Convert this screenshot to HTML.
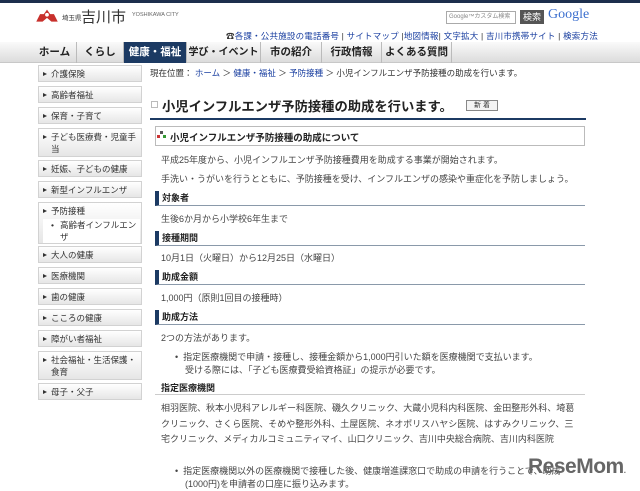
<!DOCTYPE html>
<html><head><meta charset="utf-8"><style>
*{margin:0;padding:0;box-sizing:border-box}
body{width:640px;height:491px;overflow:hidden;background:#fff;font-family:"Liberation Sans","Noto Sans CJK JP",sans-serif;font-size:9px;color:#333;position:relative}
.a{position:absolute;white-space:nowrap}
.top{position:absolute;left:0;top:0;width:640px;height:3px;background:#1d2f4d}
.nav{position:absolute;left:0;top:42px;width:640px;height:21px;background:linear-gradient(#fafafa,#dcdcdc);border-bottom:1px solid #c8c8c8}
.ni{position:absolute;top:42px;height:21px;line-height:21px;text-align:center;font-size:10.5px;font-weight:bold;color:#222;border-right:1px solid #bbb;overflow:hidden}
.ni.on{background:#1c3a63;color:#fff}
.side{position:absolute;left:38px;width:104px;background:linear-gradient(#fff,#e6e6e6);border:1px solid #d2d2d2;font-size:8.5px;padding:2px 4px 2px 12px;line-height:12px;color:#333}
.side:before{content:"";position:absolute;left:4px;top:6px;border-left:4px solid #333;border-top:2.5px solid transparent;border-bottom:2.5px solid transparent}
.h3{position:absolute;left:155px;width:430px;height:15px;border-left:4px solid #1c3a63;border-bottom:1px solid #8a99aa;font-weight:bold;font-size:9px;padding-left:3px;line-height:14px;color:#222}
.p{position:absolute;left:161px;font-size:9px;color:#444;white-space:nowrap}
a{color:#1a3fa0}
</style></head><body>
<div class="top"></div>
<svg class="a" style="left:35px;top:5px" width="24" height="22" viewBox="0 0 38 22"><path d="M19 1 L24 8 L30 8 L36 20 L26 20 L19 14 L12 20 L2 20 L8 8 L14 8Z" fill="#c8302c"/><circle cx="19" cy="9" r="3" fill="#fff"/></svg>
<div class="a" style="left:62px;top:12px;font-size:6.5px">埼玉県</div>
<div class="a" style="left:81px;top:6px;font-size:15px;color:#333">吉川市</div>
<div class="a" style="left:132px;top:12px;font-size:5.5px;color:#666">YOSHIKAWA CITY</div>
<div class="a" style="left:446px;top:11px;width:70px;height:13px;border:1px solid #aaa;font-size:6px;color:#888;line-height:11px;padding-left:2px">Google™カスタム検索</div>
<div class="a" style="left:520px;top:10px;width:24px;height:14px;background:#555;color:#fff;font-size:9px;text-align:center;line-height:14px">検索</div>
<div class="a" style="left:548px;top:7px;font-size:14px;font-family:'Liberation Serif',serif;color:#3b6fcf">Google</div>
<div class="a" style="left:226px;top:30px;font-size:8.5px;color:#333;letter-spacing:0.2px">☎<a>各課・公共施設の電話番号</a> | <a>サイトマップ</a> |<a>地図情報</a>| <a>文字拡大</a> | <a>吉川市携帯サイト</a> | <a>検索方法</a></div>
<div class="nav"></div>
<div class="ni" style="left:33px;width:44px">ホーム</div>
<div class="ni" style="left:77px;width:47px">くらし</div>
<div class="ni on" style="left:124px;width:63px">健康・福祉</div>
<div class="ni" style="left:187px;width:74px;font-size:10px">学び・イベント</div>
<div class="ni" style="left:261px;width:61px">市の紹介</div>
<div class="ni" style="left:322px;width:60px">行政情報</div>
<div class="ni" style="left:382px;width:70px">よくある質問</div>

<div class="side" style="top:65px;height:17px">介護保険</div>
<div class="side" style="top:86px;height:17px">高齢者福祉</div>
<div class="side" style="top:107px;height:17px">保育・子育て</div>
<div class="side" style="top:128px;height:29px;white-space:normal">子ども医療費・児童手当</div>
<div class="side" style="top:160px;height:17px">妊娠、子どもの健康</div>
<div class="side" style="top:181px;height:17px">新型インフルエンザ</div>
<div class="side" style="top:202px;height:42px">予防接種<div style="background:#fff;margin:2px -3px 0 -8px;padding-left:17px;white-space:normal;position:relative">高齢者インフルエンザ<span style="position:absolute;left:8px;top:0">•</span></div></div>
<div class="side" style="top:246px;height:17px">大人の健康</div>
<div class="side" style="top:267px;height:17px">医療機関</div>
<div class="side" style="top:288px;height:17px">歯の健康</div>
<div class="side" style="top:309px;height:17px">こころの健康</div>
<div class="side" style="top:330px;height:17px">障がい者福祉</div>
<div class="side" style="top:351px;height:29px;white-space:normal">社会福祉・生活保護・食育</div>
<div class="side" style="top:383px;height:17px">母子・父子</div>

<div class="a" style="left:150px;top:67px;font-size:8.5px">現在位置： <a>ホーム</a> ＞ <a>健康・福祉</a> ＞ <a>予防接種</a> ＞ 小児インフルエンザ予防接種の助成を行います。</div>
<div class="a" style="left:151px;top:101px;width:7px;height:7px;border:1px solid #bbb"></div>
<div class="a" style="left:162px;top:96px;font-size:13.3px;font-weight:bold;color:#222">小児インフルエンザ予防接種の助成を行います。</div>
<div class="a" style="left:466px;top:100px;width:32px;height:11px;border:1px solid #888;font-size:7px;text-align:center;line-height:9px;background:#f4f4f4">新 着</div>
<div class="a" style="left:150px;top:118px;width:436px;height:2px;background:#1c3a63"></div>
<div class="a" style="left:155px;top:126px;width:430px;height:20px;border:1px solid #bbb"></div>
<div class="a" style="left:160px;top:131px;width:3px;height:3px;background:#555;box-shadow:-3px 4px 0 #c33,3px 4px 0 #393"></div>
<div class="a" style="left:170px;top:130px;font-size:9.5px;font-weight:bold;color:#222">小児インフルエンザ予防接種の助成について</div>
<div class="p" style="top:153px">平成25年度から、小児インフルエンザ予防接種費用を助成する事業が開始されます。</div>
<div class="p" style="top:172px">手洗い・うがいを行うとともに、予防接種を受け、インフルエンザの感染や重症化を予防しましょう。</div>
<div class="h3" style="top:191px">対象者</div>
<div class="p" style="top:212px">生後6か月から小学校6年生まで</div>
<div class="h3" style="top:231px">接種期間</div>
<div class="p" style="top:251px">10月1日（火曜日）から12月25日（水曜日）</div>
<div class="h3" style="top:270px">助成金額</div>
<div class="p" style="top:291px">1,000円（原則1回目の接種時）</div>
<div class="h3" style="top:310px">助成方法</div>
<div class="p" style="top:331px">2つの方法があります。</div>
<div class="p" style="left:175px;top:350px">•&nbsp;&nbsp;指定医療機関で申請・接種し、接種金額から1,000円引いた額を医療機関で支払います。</div>
<div class="p" style="left:185px;top:363px">受ける際には、「子ども医療費受給資格証」の提示が必要です。</div>
<div class="a" style="left:161px;top:381px;font-size:9px;font-weight:bold;color:#222">指定医療機関</div>
<div class="a" style="left:155px;top:394px;width:430px;height:1px;background:#ccc"></div>
<div class="p" style="top:401px;line-height:15.5px">相羽医院、秋本小児科アレルギー科医院、磯久クリニック、大蔵小児科内科医院、金田整形外科、埼葛<br>クリニック、さくら医院、そめや整形外科、土屋医院、ネオポリスハヤシ医院、はすみクリニック、三<br>宅クリニック、メディカルコミュニティマイ、山口クリニック、吉川中央総合病院、吉川内科医院</div>
<div class="p" style="left:175px;top:464px">•&nbsp;&nbsp;指定医療機関以外の医療機関で接種した後、健康増進課窓口で助成の申請を行うことで、助成</div>
<div class="p" style="left:185px;top:477px">(1000円)を申請者の口座に振り込みます。</div>
<div class="a" style="left:528px;top:455px;font-size:21px;font-weight:bold;color:#666;letter-spacing:-0.5px">ReseMom<span style="font-size:8px">.</span></div>
</body></html>
